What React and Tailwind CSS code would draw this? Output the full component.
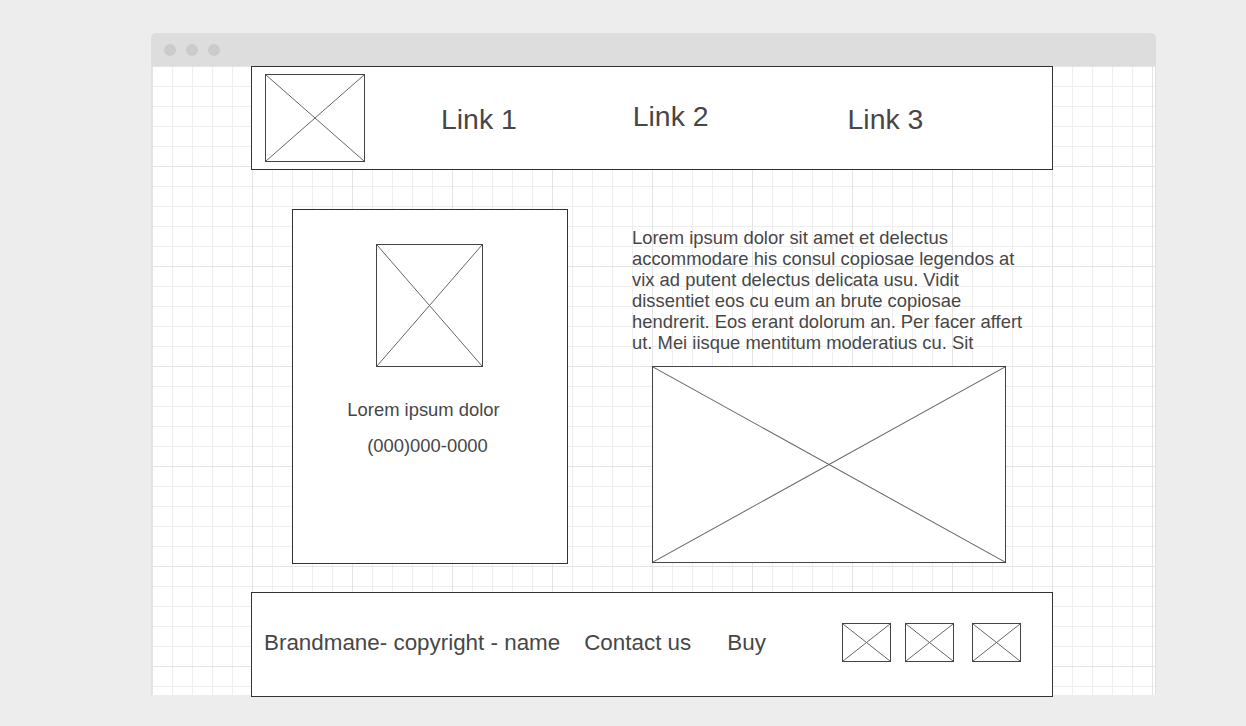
import React from "react";

function Placeholder({ className }) {
  return (
    <div className={"border border-[#444] bg-white shrink-0 " + className}>
      <svg width="100%" height="100%" viewBox="0 0 100 100" preserveAspectRatio="none" className="block">
        <line x1="0" y1="0" x2="100" y2="100" stroke="#666" strokeWidth="1" vectorEffect="non-scaling-stroke" />
        <line x1="100" y1="0" x2="0" y2="100" stroke="#666" strokeWidth="1" vectorEffect="non-scaling-stroke" />
      </svg>
    </div>
  );
}

const lines = [
  "Lorem ipsum dolor sit amet et delectus",
  "accommodare his consul copiosae legendos at",
  "vix ad putent delectus delicata usu. Vidit",
  "dissentiet eos cu eum an brute copiosae",
  "hendrerit. Eos erant dolorum an. Per facer affert",
  "ut. Mei iisque mentitum moderatius cu. Sit",
];

export default function App() {
  return (
    <div className="w-[1246px] h-[726px] bg-[#ededed] pt-[33px] pl-[151px] font-['Liberation_Sans',Arial,sans-serif] text-[#474747] overflow-hidden">
      <div className="w-[1005px]">
        <div className="h-[33px] bg-[#dddddd] rounded-t-[5px] flex items-center pl-[13px] gap-[10px]">
          <div className="w-[12px] h-[12px] rounded-full bg-[#cbcbcb]" />
          <div className="w-[12px] h-[12px] rounded-full bg-[#cbcbcb]" />
          <div className="w-[12px] h-[12px] rounded-full bg-[#cbcbcb]" />
        </div>
        <div className="h-[629px] border-l border-r border-[#e2e2e2] bg-white bg-[linear-gradient(to_right,#e4e4e4_1px,transparent_1px),linear-gradient(to_bottom,#e4e4e4_1px,transparent_1px),linear-gradient(to_right,#efefef_1px,transparent_1px),linear-gradient(to_bottom,#efefef_1px,transparent_1px)] bg-size-[100px_100px,100px_100px,20px_20px,20px_20px]">
          {/* header */}
          <div className="ml-[99px] w-[802px] h-[104px] border border-[#333] bg-white flex items-start pl-[13px]">
            <Placeholder className="w-[100px] h-[88px] mt-[7px]" />
            <div className="ml-[76px] mt-[38px] text-[28.4px] leading-[28px] whitespace-nowrap">Link 1</div>
            <div className="ml-[116px] mt-[35px] text-[28.4px] leading-[28px] whitespace-nowrap">Link 2</div>
            <div className="ml-[139px] mt-[38px] text-[28.4px] leading-[28px] whitespace-nowrap">Link 3</div>
          </div>

          {/* main row */}
          <div className="mt-[39px] ml-[140px] flex items-start">
            <div className="w-[276px] h-[355px] border border-[#333] bg-white flex flex-col items-center pt-[34px]">
              <Placeholder className="w-[107px] h-[123px] mr-[1px]" />
              <div className="mt-[32px] text-[18.4px] leading-[21px] whitespace-nowrap mr-[13px]">Lorem ipsum dolor</div>
              <div className="mt-[15px] text-[18.4px] leading-[21px] whitespace-nowrap mr-[5px]">(000)000-0000</div>
            </div>
            <div className="ml-[64px] pt-[18px]">
              <div className="text-[18.4px] leading-[21px] whitespace-nowrap">
                {lines.map((l) => (
                  <div key={l}>{l}</div>
                ))}
              </div>
              <Placeholder className="ml-[20px] mt-[13px] w-[354px] h-[197px]" />
            </div>
          </div>

          {/* footer */}
          <div className="mt-[28px] ml-[99px] w-[802px] h-[105px] border border-[#333] bg-white flex items-start pl-[12px] text-[22.4px] leading-[22px]">
            <div className="mt-[39px] whitespace-nowrap">Brandmane- copyright - name</div>
            <div className="mt-[39px] ml-[24px] whitespace-nowrap">Contact us</div>
            <div className="mt-[39px] ml-[36px] whitespace-nowrap">Buy</div>
            <Placeholder className="ml-[76px] mt-[30px] w-[49px] h-[39px]" />
            <Placeholder className="ml-[14px] mt-[30px] w-[49px] h-[39px]" />
            <Placeholder className="ml-[18px] mt-[30px] w-[49px] h-[39px]" />
          </div>
        </div>
      </div>
    </div>
  );
}
